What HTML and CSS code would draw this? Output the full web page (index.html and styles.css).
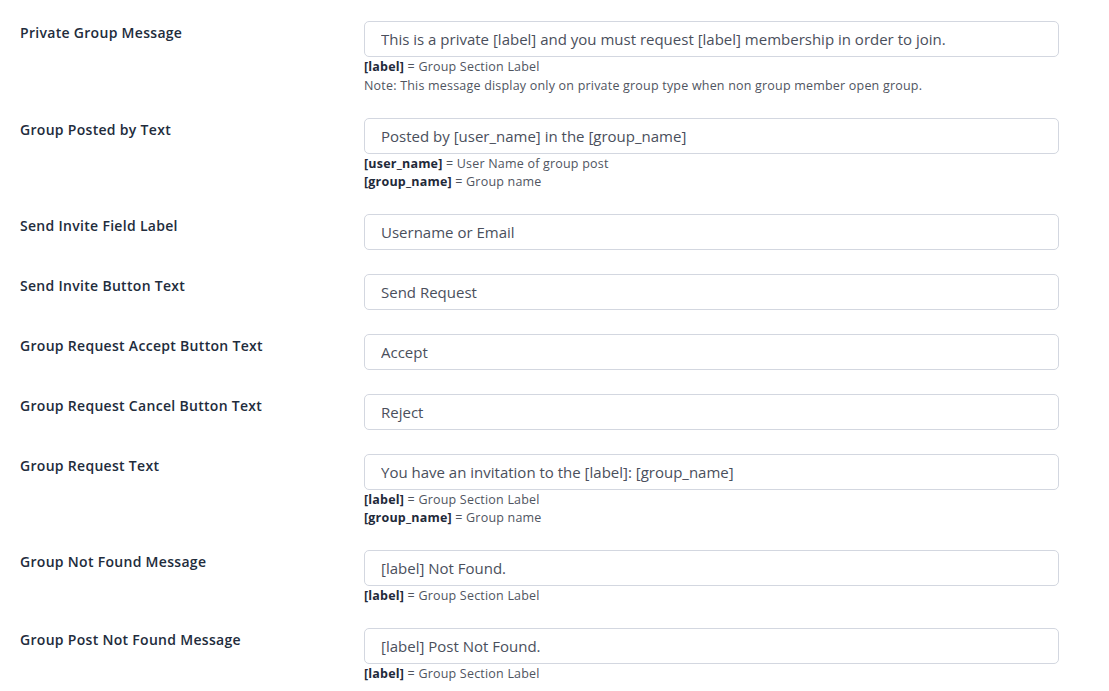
FILE: index.html
```html
<!DOCTYPE html>
<html lang="en">
<head>
    <meta charset="UTF-8">
    <meta name="viewport" content="width=device-width, initial-scale=1.0">
    <title>Group Settings</title>
    <link rel="stylesheet" href="styles.css">
</head>
<body>
    <div class="settings">
        <div class="row">
            <label class="field-label" for="private-msg">Private Group Message</label>
            <div class="field">
                <input type="text" id="private-msg" value="This is a private [label] and you must request [label] membership in order to join.">
                <div class="hints">
                    <p class="help"><b>[label]</b> = Group Section Label</p>
                    <p class="help note">Note: This message display only on private group type when non group member open group.</p>
                </div>
            </div>
        </div>
        <div class="row">
            <label class="field-label" for="posted-by">Group Posted by Text</label>
            <div class="field">
                <input type="text" id="posted-by" value="Posted by [user_name] in the [group_name]">
                <div class="hints">
                    <p class="help"><b>[user_name]</b> = User Name of group post</p>
                    <p class="help"><b>[group_name]</b> = Group name</p>
                </div>
            </div>
        </div>
        <div class="row">
            <label class="field-label" for="invite-label">Send Invite Field Label</label>
            <div class="field">
                <input type="text" id="invite-label" value="Username or Email">
            </div>
        </div>
        <div class="row">
            <label class="field-label" for="invite-btn">Send Invite Button Text</label>
            <div class="field">
                <input type="text" id="invite-btn" value="Send Request">
            </div>
        </div>
        <div class="row">
            <label class="field-label" for="accept-btn">Group Request Accept Button Text</label>
            <div class="field">
                <input type="text" id="accept-btn" value="Accept">
            </div>
        </div>
        <div class="row">
            <label class="field-label" for="cancel-btn">Group Request Cancel Button Text</label>
            <div class="field">
                <input type="text" id="cancel-btn" value="Reject">
            </div>
        </div>
        <div class="row">
            <label class="field-label" for="request-text">Group Request Text</label>
            <div class="field">
                <input type="text" id="request-text" value="You have an invitation to the [label]: [group_name]">
                <div class="hints">
                    <p class="help"><b>[label]</b> = Group Section Label</p>
                    <p class="help"><b>[group_name]</b> = Group name</p>
                </div>
            </div>
        </div>
        <div class="row">
            <label class="field-label" for="not-found">Group Not Found Message</label>
            <div class="field">
                <input type="text" id="not-found" value="[label] Not Found.">
                <div class="hints">
                    <p class="help"><b>[label]</b> = Group Section Label</p>
                </div>
            </div>
        </div>
        <div class="row">
            <label class="field-label" for="post-not-found">Group Post Not Found Message</label>
            <div class="field">
                <input type="text" id="post-not-found" value="[label] Post Not Found.">
                <div class="hints">
                    <p class="help"><b>[label]</b> = Group Section Label</p>
                </div>
            </div>
        </div>
    </div>
</body>
</html>
```

FILE: styles.css
```css
* {
    box-sizing: border-box;
    margin: 0;
    padding: 0;
}
body {
    background: #fff;
    font-family: "Open Sans", "Liberation Sans", sans-serif;
    color: #1d2939;
}
.settings {
    padding: 21px 0 0 20px;
}
.row {
    display: grid;
    grid-template-columns: 344px 695px;
    padding-bottom: 24px;
}
.field-label {
    padding-top: 2px;
    font-size: 14px;
    line-height: 20px;
    font-weight: 600;
    letter-spacing: 0.3px;
    color: #222c3c;
}
.field input[type="text"] {
    display: block;
    width: 100%;
    height: 36px;
    padding: 0 16px;
    border: 1px solid #d3d7e0;
    border-radius: 5px;
    font-family: inherit;
    font-size: 15px;
    color: #4a4f5c;
    outline: none;
}
/* help lines under an input */
.hints {
    margin: 1px 0 -1px;
}
.help {
    font-size: 12.5px;
    line-height: 18px;
    letter-spacing: 0.2px;
    color: #50555f;
}
.note {
    margin-top: 1px;
}
.help b {
    font-weight: 700;
    color: #1f2a3a;
}
```
